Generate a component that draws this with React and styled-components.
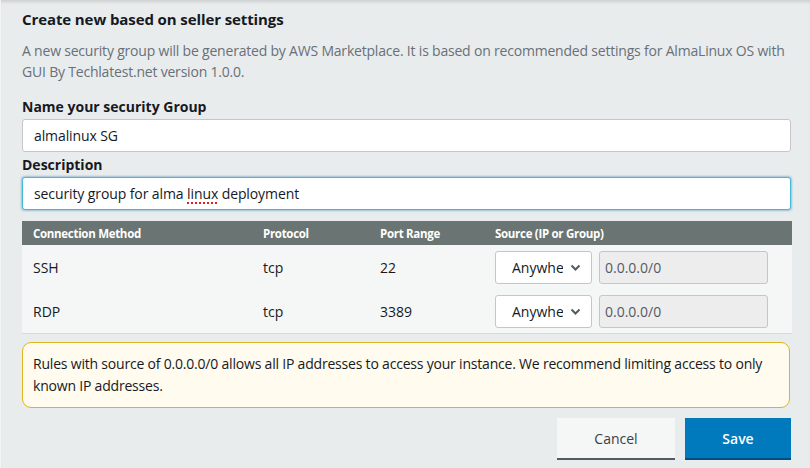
import styled, { createGlobalStyle } from "styled-components";

const GlobalStyle = createGlobalStyle`
  html, body {
    margin: 0;
    padding: 0;
    background: #e9eced;
  }
  body {
    font-family: "Open Sans", "Noto Sans", Arial, sans-serif;
    color: #16191f;
  }
`;

// styles
const Panel = styled.div`
  width: 810px;
  height: 468px;
  box-sizing: border-box;
  padding: 9px 19px 0 21px;
  border-left: 1px solid #f3f4f4;
  box-shadow: inset 0 4px 4px -3px rgba(0, 0, 0, 0.18);
  display: flex;
  flex-direction: column;
`;

const Title = styled.h2`
  margin: 0;
  font-size: 15px;
  line-height: 20px;
  font-weight: 700;
  letter-spacing: -0.1px;
  color: #16191f;
`;

const Intro = styled.p`
  margin: 11px 0 0;
  font-size: 14px;
  line-height: 21px;
  letter-spacing: -0.2px;
  color: #687078;
`;

const Label = styled.label`
  display: block;
  margin-top: ${(p) => p.$top || 0}px;
  font-size: 14px;
  line-height: 20px;
  font-weight: 700;
  color: #16191f;
`;

const TextBox = styled.div`
  box-sizing: border-box;
  height: 33px;
  margin-top: 2px;
  padding: 0 11px;
  display: flex;
  align-items: center;
  background: #fff;
  border: 1px solid ${(p) => (p.$focused ? "#44b9d6" : "#c6c6c6")};
  border-radius: 3px;
  box-shadow: ${(p) => (p.$focused ? "0 0 2px 1px rgba(0, 115, 187, 0.35)" : "none")};
  font-size: 14px;
  letter-spacing: -0.1px;
  color: #16191f;
  white-space: nowrap;
`;

const Misspelled = styled.span`
  text-decoration: underline dotted #e02020;
  text-decoration-thickness: 2px;
  text-underline-offset: 3px;
`;

const Table = styled.table`
  margin-top: 11px;
  width: 770px;
  border-collapse: collapse;
  font-size: 14px;
`;

const Th = styled.th`
  height: 24px;
  padding: 0 0 0 11px;
  text-align: left;
  background: #6a7472;
  color: #fff;
  font-size: 11.5px;
  font-weight: 700;
  letter-spacing: -0.3px;
  width: ${(p) => p.$w}px;
`;

const Tr = styled.tr`
  background: #f5f6f6;
  border-bottom: ${(p) => (p.$last ? "1px solid #d5dbdb" : "none")};
`;

const Td = styled.td`
  height: 44px;
  padding: 0 0 0 11px;
  color: #16191f;
`;

const SourceCell = styled.div`
  display: flex;
  align-items: center;
  gap: 7px;
`;

const SelectWrap = styled.div`
  position: relative;
  width: 97px;
  height: 33px;
  svg {
    position: absolute;
    right: 11px;
    top: 12px;
    pointer-events: none;
  }
`;

const Select = styled.select`
  appearance: none;
  width: 100%;
  height: 100%;
  box-sizing: border-box;
  padding: 0 28px 0 16px;
  background: #fff;
  border: 1px solid #c6c6c6;
  border-radius: 3px;
  font-family: inherit;
  font-size: 14px;
  color: #16191f;
`;

const IpInput = styled.input`
  box-sizing: border-box;
  width: 169px;
  height: 33px;
  padding: 0 5px;
  background: #ededed;
  border: 1px solid #c6c6c6;
  border-radius: 3px;
  font-family: inherit;
  font-size: 14px;
  color: #545b64;
`;

const Alert = styled.div`
  margin-top: 8px;
  width: 768px;
  box-sizing: border-box;
  padding: 10px 10px;
  background: #fffbee;
  border: 1px solid #e0b519;
  border-radius: 9px;
  font-size: 14px;
  line-height: 22px;
  letter-spacing: -0.2px;
  color: #16191f;
`;

const Footer = styled.div`
  margin-top: 10px;
  display: flex;
  justify-content: flex-end;
  gap: 10px;
`;

const Button = styled.button`
  box-sizing: border-box;
  width: ${(p) => p.$w}px;
  height: 42px;
  border: none;
  border-bottom: 2px solid ${(p) => (p.$primary ? "#004f80" : "#545b64")};
  background: ${(p) => (p.$primary ? "#0079bd" : "#f5f6f6")};
  color: ${(p) => (p.$primary ? "#fff" : "#3b4048")};
  font-family: inherit;
  font-size: 14px;
  font-weight: ${(p) => (p.$primary ? 600 : 400)};
  cursor: pointer;
`;

const Chevron = () => (
  <svg width="11" height="9" viewBox="0 0 11 9">
    <path d="M1.5 2.5 L5.5 6.5 L9.5 2.5" fill="none" stroke="#545b64" strokeWidth="2" />
  </svg>
);

const rules = [
  { method: "SSH", protocol: "tcp", port: "22" },
  { method: "RDP", protocol: "tcp", port: "3389" },
];

const App = () => {
  return (
    <>
      <GlobalStyle />
      <Panel>
        <Title>Create new based on seller settings</Title>
        <Intro>
          A new security group will be generated by AWS Marketplace. It is based on
          recommended settings for AlmaLinux OS with GUI By Techlatest.net version 1.0.0.
        </Intro>

        <Label $top={15}>Name your security Group</Label>
        <TextBox>almalinux SG</TextBox>

        <Label $top={3}>Description</Label>
        <TextBox $focused>
          security group for alma&nbsp;<Misspelled>linux</Misspelled>&nbsp;deployment
        </TextBox>

        <Table>
          <thead>
            <tr>
              <Th $w={219}>Connection Method</Th>
              <Th $w={106}>Protocol</Th>
              <Th $w={104}>Port Range</Th>
              <Th>Source (IP or Group)</Th>
            </tr>
          </thead>
          <tbody>
            {rules.map((r, i) => (
              <Tr key={r.method} $last={i === rules.length - 1}>
                <Td>{r.method}</Td>
                <Td>{r.protocol}</Td>
                <Td>{r.port}</Td>
                <Td>
                  <SourceCell>
                    <SelectWrap>
                      <Select defaultValue="anywhere">
                        <option value="anywhere">Anywhere</option>
                        <option value="custom">Custom IP</option>
                        <option value="myip">My IP</option>
                      </Select>
                      <Chevron />
                    </SelectWrap>
                    <IpInput value="0.0.0.0/0" disabled readOnly />
                  </SourceCell>
                </Td>
              </Tr>
            ))}
          </tbody>
        </Table>

        <Alert>
          Rules with source of 0.0.0.0/0 allows all IP addresses to access your instance.
          We recommend limiting access to only known IP addresses.
        </Alert>

        <Footer>
          <Button $w={118}>Cancel</Button>
          <Button $w={106} $primary>
            Save
          </Button>
        </Footer>
      </Panel>
    </>
  );
};

export default App;
